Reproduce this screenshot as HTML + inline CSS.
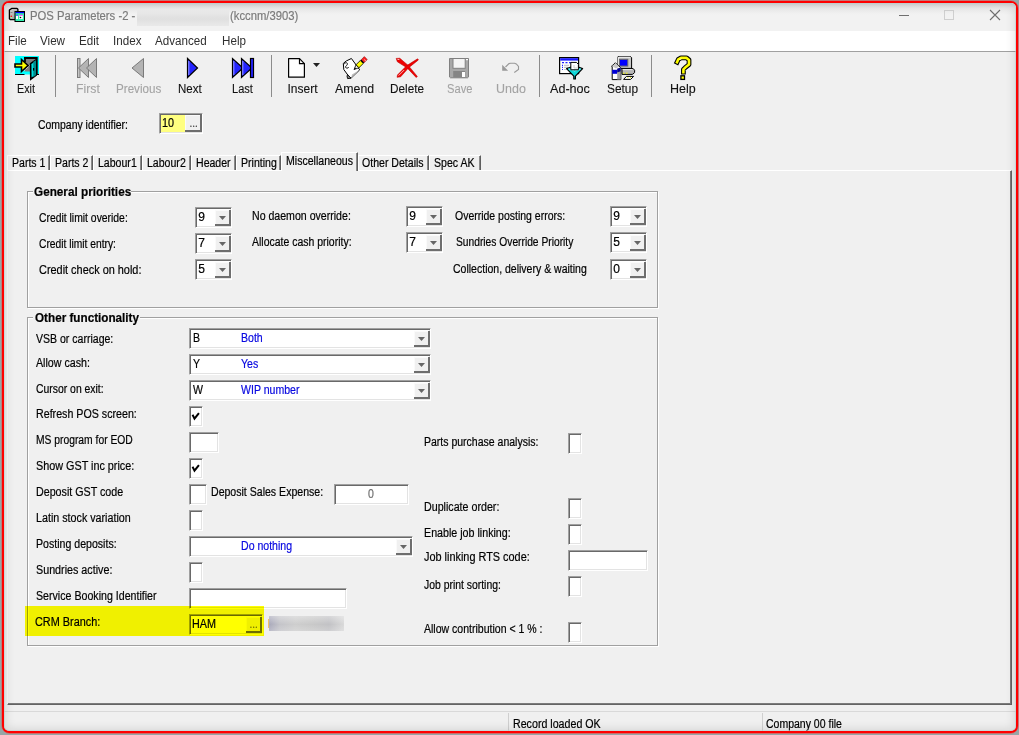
<!DOCTYPE html><html><head><meta charset="utf-8"><style>
html,body{margin:0;padding:0}
body{width:1019px;height:735px;position:relative;overflow:hidden;background:#97a5a6;font-family:"Liberation Sans",sans-serif}
.a{position:absolute;box-sizing:border-box}
.t{position:absolute;white-space:nowrap;transform-origin:0 0;font-family:"Liberation Sans",sans-serif;-webkit-text-stroke:0.2px currentColor}
.sk{border-style:solid;border-width:1px;border-color:#a0a0a0 #fff #fff #a0a0a0;box-shadow:inset 1px 1px 0 #696969,inset -1px -1px 0 #e3e3e3}
.cb{background:#f0f0f0;border-right:2px solid #6e6e6e;border-bottom:2px solid #6e6e6e;box-shadow:inset 1px 1px 0 #fafafa}
.tri{position:absolute;left:4px;top:6px;width:7px;height:4px;background:#666;clip-path:polygon(0 0,100% 0,50% 100%)}
.grp{position:absolute;box-sizing:border-box;border:1px solid #a0a0a0;box-shadow:1px 1px 0 #fff, inset 1px 1px 0 #fff}
.sep{position:absolute;width:1px;background:#8a8a8a}
</style></head><body>
<div class="a" style="left:1px;top:0px;width:1018px;height:734px;border:1px solid rgba(225,90,90,.6);border-radius:9px;border-left-color:rgba(210,100,100,.55);border-bottom-color:rgba(240,70,70,.6)"></div>
<div class="a" style="left:2px;top:1px;width:1016px;height:732px;border:2px solid #ff0000;border-radius:7px;background:#f0f0f0"></div>
<div class="a" style="left:4px;top:3px;width:1012px;height:28px;border-radius:5px 5px 0 0;background:linear-gradient(#d6d6d6,#ebebeb 5px,#f2f2f2 12px,#f2f2f2)"></div>
<div class="a" style="left:4px;top:31px;width:1012px;height:20px;background:#fff"></div>
<div class="a" style="left:4px;top:51px;width:1012px;height:1px;background:#a0a0a0"></div>
<svg class="a" style="left:6px;top:4px" width="22" height="22" viewBox="0 0 22 22"><defs><linearGradient id="tw" x1="0" y1="0" x2="1" y2="1"><stop offset="0" stop-color="#e0e0e0"/><stop offset="1" stop-color="#8c8c8c"/></linearGradient></defs>
<path d="M5.6 4.4 h5.4 l0.9 0.9 v10.3 h-7.6 l-0.9-0.9 v-8.6z" fill="url(#tw)" stroke="#000" stroke-width="1.3" stroke-linejoin="round"/>
<rect x="4.5" y="8" width="2" height="1" fill="#888"/><circle cx="5.3" cy="12.3" r="0.8" fill="#f00"/><rect x="4.6" y="13" width="1.4" height="1" fill="#9f9"/>
<rect x="9" y="7.5" width="9.5" height="10" fill="#30f0b0" stroke="#000" stroke-width="1"/>
<rect x="9.5" y="8" width="8.5" height="1.2" fill="#00f"/>
<rect x="10" y="11" width="2" height="4" fill="#fff"/><rect x="10" y="10.8" width="2" height="0.8" fill="#00f"/>
<rect x="13.2" y="11" width="3.6" height="4" fill="#fff"/><rect x="13.2" y="10.8" width="3.6" height="0.8" fill="#f0f"/>
<circle cx="14.5" cy="13.5" r="0.8" fill="#000"/>
</svg>
<div class="t" style="left:30.1px;top:9.84px;font-size:12px;line-height:12px;color:#7b7b7b;font-weight:400;transform:scaleX(0.94);">POS Parameters -2 -</div>
<div class="a" style="left:137px;top:9px;width:92px;height:17px;background:linear-gradient(180deg,#eeeeee,#e2e2e2 45%,#e0e0e0 60%,#e9e9e9)"></div>
<div class="t" style="left:230.0px;top:9.84px;font-size:12px;line-height:12px;color:#7b7b7b;font-weight:400;transform:scaleX(0.94);">(kccnm/3903)</div>
<div class="a" style="left:899px;top:15px;width:10px;height:1px;background:#6f6f6f"></div>
<div class="a" style="left:944px;top:10px;width:10px;height:10px;border:1px solid #cfcfcf"></div>
<svg class="a" style="left:989px;top:9px" width="12" height="12"><path d="M1 1 L11 11 M11 1 L1 11" stroke="#6f6f6f" stroke-width="1.1"/></svg>
<div class="t" style="left:8.2px;top:34.84px;font-size:12px;line-height:12px;color:#303030;font-weight:400;transform:scaleX(0.97);-webkit-text-stroke:0">File</div>
<div class="t" style="left:40.1px;top:34.84px;font-size:12px;line-height:12px;color:#303030;font-weight:400;transform:scaleX(0.97);-webkit-text-stroke:0">View</div>
<div class="t" style="left:79.2px;top:34.84px;font-size:12px;line-height:12px;color:#303030;font-weight:400;transform:scaleX(0.97);-webkit-text-stroke:0">Edit</div>
<div class="t" style="left:113.0px;top:34.84px;font-size:12px;line-height:12px;color:#303030;font-weight:400;transform:scaleX(0.97);-webkit-text-stroke:0">Index</div>
<div class="t" style="left:155.0px;top:34.84px;font-size:12px;line-height:12px;color:#303030;font-weight:400;transform:scaleX(0.97);-webkit-text-stroke:0">Advanced</div>
<div class="t" style="left:222.2px;top:34.84px;font-size:12px;line-height:12px;color:#303030;font-weight:400;transform:scaleX(0.97);-webkit-text-stroke:0">Help</div>
<div class="a" style="left:55px;top:55px;width:1px;height:42px;background:#8c8c8c"></div>
<div class="a" style="left:271px;top:55px;width:1px;height:42px;background:#8c8c8c"></div>
<div class="a" style="left:539px;top:55px;width:1px;height:42px;background:#8c8c8c"></div>
<div class="a" style="left:651px;top:55px;width:1px;height:42px;background:#8c8c8c"></div>
<div class="t" style="left:17.4px;top:82.84px;font-size:12px;line-height:12px;color:#111;font-weight:400;transform:scaleX(0.9);-webkit-text-stroke:0.1px currentColor">Exit</div>
<div class="t" style="left:75.8px;top:82.84px;font-size:12px;line-height:12px;color:#a3a3a3;font-weight:400;transform:scaleX(1.02);-webkit-text-stroke:0.1px currentColor">First</div>
<div class="t" style="left:116.0px;top:82.84px;font-size:12px;line-height:12px;color:#a3a3a3;font-weight:400;transform:scaleX(0.97);-webkit-text-stroke:0.1px currentColor">Previous</div>
<div class="t" style="left:177.8px;top:82.84px;font-size:12px;line-height:12px;color:#111;font-weight:400;transform:scaleX(0.96);-webkit-text-stroke:0.1px currentColor">Next</div>
<div class="t" style="left:231.9px;top:82.84px;font-size:12px;line-height:12px;color:#111;font-weight:400;transform:scaleX(0.92);-webkit-text-stroke:0.1px currentColor">Last</div>
<div class="t" style="left:287.5px;top:82.84px;font-size:12px;line-height:12px;color:#111;font-weight:400;transform:scaleX(1.0);-webkit-text-stroke:0.1px currentColor">Insert</div>
<div class="t" style="left:334.9px;top:82.84px;font-size:12px;line-height:12px;color:#111;font-weight:400;transform:scaleX(1.03);-webkit-text-stroke:0.1px currentColor">Amend</div>
<div class="t" style="left:390.0px;top:82.84px;font-size:12px;line-height:12px;color:#111;font-weight:400;transform:scaleX(0.98);-webkit-text-stroke:0.1px currentColor">Delete</div>
<div class="t" style="left:447.1px;top:82.84px;font-size:12px;line-height:12px;color:#a3a3a3;font-weight:400;transform:scaleX(0.93);-webkit-text-stroke:0.1px currentColor">Save</div>
<div class="t" style="left:495.9px;top:82.84px;font-size:12px;line-height:12px;color:#a3a3a3;font-weight:400;transform:scaleX(1.04);-webkit-text-stroke:0.1px currentColor">Undo</div>
<div class="t" style="left:549.6px;top:82.84px;font-size:12px;line-height:12px;color:#111;font-weight:400;transform:scaleX(1.05);-webkit-text-stroke:0.1px currentColor">Ad-hoc</div>
<div class="t" style="left:606.6px;top:82.84px;font-size:12px;line-height:12px;color:#111;font-weight:400;transform:scaleX(0.99);-webkit-text-stroke:0.1px currentColor">Setup</div>
<div class="t" style="left:669.7px;top:82.84px;font-size:12px;line-height:12px;color:#111;font-weight:400;transform:scaleX(1.04);-webkit-text-stroke:0.1px currentColor">Help</div>
<svg class="a" style="left:12px;top:53px" width="30" height="30" viewBox="0 0 30 30">
<rect x="3" y="3" width="24" height="18.5" fill="#00ffff"/>
<path d="M3 21.5 h9.5 M24 21.5 h3" stroke="#000" stroke-width="1"/>
<path d="M12.5 5.5 h12 v13 h-12z" fill="#808080"/>
<path d="M12 5 h12.8 v16.5 M13 5 v4" fill="none" stroke="#000" stroke-width="1.8"/>
<path d="M12.5 17.5 L18 12" stroke="#fff" stroke-width="1" stroke-dasharray="1 1"/>
<path d="M18.6 10.6 L24.2 6.8 V22 L18.8 26.2 z" fill="#00e0e0" stroke="#000" stroke-width="1.6"/>
<path d="M21.3 8.8 L24 7.2 V22 L21.3 24.2z" fill="#008a8a"/>
<rect x="21" y="15" width="1.2" height="2.6" fill="#000"/>
<path d="M3 11 h6.5 v-4.5 l6.5 6 l-6.5 6 v-4.5 h-6.5z" fill="#ffff00" stroke="#000" stroke-width="1.6"/>
</svg>
<svg class="a" style="left:72px;top:54px" width="30" height="28" viewBox="0 0 30 28">
<rect x="5.5" y="4.5" width="2.5" height="19" fill="#c4c4c4" stroke="#7a7a7a" stroke-width="1"/>
<path d="M16.5 4.5 V23.5 L6.5 14z" fill="#b4b4b4" stroke="#7a7a7a" stroke-width="1"/>
<path d="M24.5 4.5 V23.5 L14.5 14z" fill="#b4b4b4" stroke="#7a7a7a" stroke-width="1"/>
</svg>
<svg class="a" style="left:126px;top:54px" width="22" height="28" viewBox="0 0 22 28">
<path d="M17.5 4.5 V23.5 L6 14z" fill="#b4b4b4" stroke="#7a7a7a" stroke-width="1"/>
</svg>
<svg class="a" style="left:182px;top:54px" width="22" height="28" viewBox="0 0 22 28">
<path d="M5.5 4.5 V23.5 L15.5 14z" fill="#2424ff" stroke="#000" stroke-width="1.2"/>
<path d="M6.8 7 V21" stroke="#9a9aff" stroke-width="1"/>
</svg>
<svg class="a" style="left:228px;top:54px" width="30" height="28" viewBox="0 0 30 28">
<path d="M4.5 4.5 V23.5 L15 14z" fill="#2424ff" stroke="#000" stroke-width="1.2"/>
<path d="M13.5 4.5 V23.5 L24 14z" fill="#2424ff" stroke="#000" stroke-width="1.2"/>
<rect x="22.5" y="4.5" width="3" height="19" fill="#2424ff" stroke="#000" stroke-width="1.2"/>
<path d="M5.8 7 V21 M14.8 7 V21" stroke="#9a9aff" stroke-width="1"/>
</svg>
<svg class="a" style="left:284px;top:54px" width="40" height="28" viewBox="0 0 40 28">
<path d="M4.6 4.6 H15.5 L20.4 9.6 V23.2 H4.6z" fill="#fff" stroke="#000" stroke-width="1.2" stroke-linejoin="round"/>
<path d="M15.5 4.6 V9.6 H20.4" fill="none" stroke="#000" stroke-width="1.2"/>
<path d="M29 9 H36 L32.5 13z" fill="#222"/>
</svg>
<svg class="a" style="left:338px;top:53px" width="34" height="29" viewBox="0 0 34 29">
<path d="M13.4 5.5 L21.7 16.8 L13 25.2 L9.8 22 L5.8 16.5 L5.3 10.4 L8.2 8z" fill="#fff" stroke="#000" stroke-width="1"/>
<path d="M14 21.5 L21.7 16.8 L13 25.2z" fill="#bbb"/>
<path d="M9.6 21.8 L13 25.2 L9.6 25.6 L9 23z" fill="#8a8a8a" stroke="#000" stroke-width="0.9"/>
<path d="M6.2 11.2 C7 9 9.8 9.4 9.4 11.2 C9 13 7.2 12.8 7.6 14.3 C8 15.6 10.2 15.4 10.8 14" fill="none" stroke="#000" stroke-width="0.9"/>
<path d="M16 16.6 L18.05 11.69 L20.95 14.71z" fill="#e8e8e8" stroke="#000" stroke-width="0.8"/>
<path d="M16 16.6 L16.9 14.4 L18.3 15.6z" fill="#000"/>
<path d="M18.05 11.69 L22.35 7.49 L25.25 10.51 L20.95 14.71z" fill="#ffff00" stroke="#000" stroke-width="0.8"/>
<path d="M22.35 7.49 L23.35 6.49 L26.25 9.51 L25.25 10.51z" fill="#000"/>
<path d="M23.35 6.49 L26.35 3.59 L29.25 6.61 L26.25 9.51z" fill="#ff2020" stroke="#600" stroke-width="0.5"/>
<path d="M26 6.5 L28 8" stroke="#ff9a9a" stroke-width="1"/>
</svg>
<svg class="a" style="left:392px;top:54px" width="30" height="28" viewBox="0 0 30 28">
<path d="M4.2 4.4 L7.8 4.3 L16.2 11.4 L25.3 22.4 L24.2 23.5 L15 13.8 L5.4 7.8z" fill="#ee0000" stroke="#c00000" stroke-width="0.6"/>
<path d="M25.6 4.8 L26.4 5.9 L16.6 13.8 L8.6 22.8 L5.1 23.3 L5.5 20.9 L14.8 11.6z" fill="#ee0000" stroke="#c00000" stroke-width="0.6"/>
<path d="M5.4 5.3 L7.4 5.6 M6.6 21.6 L12.2 16" stroke="#ffc8c8" stroke-width="0.9"/>
</svg>
<svg class="a" style="left:444px;top:54px" width="30" height="28" viewBox="0 0 30 28">
<path d="M5.5 4.5 H24.5 V23 L23.5 23.8 H6.5 L5.5 23z" fill="#a8a8a8" stroke="#808080" stroke-width="1"/>
<rect x="9" y="4.5" width="12.2" height="9.8" fill="#f4f4f4" stroke="#808080" stroke-width="1"/>
<rect x="9.2" y="17" width="12" height="6.4" fill="#858585"/>
<rect x="18" y="18" width="3" height="5" fill="#fff"/>
<rect x="22" y="5" width="2" height="1.2" fill="#fff"/>
</svg>
<svg class="a" style="left:496px;top:56px" width="28" height="24" viewBox="0 0 28 24">
<path d="M6.2 8.8 V14.7 H12.1z" fill="#999"/>
<path d="M9.5 11 L13 7.6 L14.6 7.3 H18.6 L20.3 8 L22.5 10.4 V13.4 L18.3 16.5" fill="none" stroke="#999" stroke-width="1.1"/>
</svg>
<svg class="a" style="left:555px;top:53px" width="34" height="30" viewBox="0 0 34 30">
<rect x="4.6" y="4.6" width="19" height="16" fill="#fff" stroke="#000" stroke-width="1.2"/>
<rect x="5.2" y="5.2" width="17.8" height="2.4" fill="#1818ff"/>
<path d="M7 9.6 h2 M10.5 9.6 h2 M14 9.6 h2" stroke="#2020ff" stroke-width="1.2"/>
<path d="M7 12.3 h1 M7 14.4 h1 M7 16.5 h1" stroke="#2020ff" stroke-width="1.2"/>
<path d="M9 12.3 h5 M9 14.4 h4 M9 16.5 h3" stroke="#c8c8c8" stroke-width="1.2"/>
<path d="M11.6 15.6 L19.6 12.8 L27.6 15.6 L20.4 23.2 V26 H18.8 V23.2z" fill="#10d8d8" stroke="#000" stroke-width="1.2" stroke-linejoin="round"/>
<path d="M13.5 15.8 L19.6 18 L25.8 15.8" fill="none" stroke="#8ff" stroke-width="1"/>
<path d="M15.8 9.4 H21.5 L23.4 11.4 V16.8 H15.8z" fill="#fff" stroke="#000" stroke-width="1"/>
<path d="M19 12 V15 H22" fill="none" stroke="#ccc" stroke-width="1"/>
</svg>
<svg class="a" style="left:606px;top:53px" width="34" height="30" viewBox="0 0 34 30">
<path d="M12 3.6 H24.6 L25.6 4.6 V15.4 H12z" fill="#c8c8c8" stroke="#000" stroke-width="1"/>
<path d="M12.5 4.2 H24.2 M12.6 4.2 V14.8" stroke="#fff" stroke-width="1"/>
<rect x="13.4" y="6.3" width="8.4" height="6.8" fill="#0000ff" stroke="#6a6a6a" stroke-width="1"/>
<path d="M16 15.6 H27.2 L28.6 17.2 V19.6 L26.4 21.4 H16z" fill="#b8b8b8" stroke="#000" stroke-width="1"/>
<path d="M16.6 16.6 H26.6" stroke="#eee" stroke-width="1"/>
<path d="M17 20.2 h1.6 M20 20.2 h1.6" stroke="#ffff00" stroke-width="1"/>
<path d="M5.6 13.2 L9.4 9.8 L10.4 10.8 L14.8 14.8 V26.6 H6.2 V13.4z" fill="#fff" stroke="#000" stroke-width="1"/>
<path d="M6 13 L9.4 10.2 L13 13.6 L10 15.6z" fill="#c8c8c8"/>
<rect x="6.2" y="16.8" width="5" height="4" fill="#0000d8"/>
<path d="M11.2 15.8 L14.6 14.6 V26.4 L11.2 26.4z" fill="#a0a0a0"/>
<path d="M11.2 15.8 L14.6 14.6 V18.2 L11.2 19.6z" fill="#000090"/>
<path d="M17.6 26.4 H24.6 L27.6 23.4 H20.4z" fill="#fff" stroke="#000" stroke-width="1"/>
<path d="M21.4 24.6 h1 M24 24.6 h1" stroke="#ee0" stroke-width="1"/>
</svg>
<svg class="a" style="left:668px;top:53px" width="30" height="30" viewBox="0 0 30 30">
<path d="M9 9.2 L10.3 6.4 L13 4.9 H18.6 L21 6.9 V11.6 L17.2 14.6 L15.4 16.4 V19.2" fill="none" stroke="#000" stroke-width="4.8" stroke-linejoin="round" stroke-linecap="square"/>
<path d="M9 9.2 L10.3 6.4 L13 4.9 H18.6 L21 6.9 V11.6 L17.2 14.6 L15.4 16.4 V19.2" fill="none" stroke="#ffff00" stroke-width="2.6" stroke-linejoin="round" stroke-linecap="square"/>
<path d="M11.5 6.5 L13.5 5.8" stroke="#ffffc0" stroke-width="1"/>
<rect x="12.9" y="22.8" width="3.6" height="3.6" fill="#ffff00" stroke="#000" stroke-width="1.3"/>
</svg>
<div class="t" style="left:37.8px;top:118.84px;font-size:12px;line-height:12px;color:#000;font-weight:400;transform:scaleX(0.8702);">Company identifier:</div>
<div class="a sk" style="left:159px;top:113px;width:44px;height:21px;background:#ffff80"></div>
<div class="a cb" style="left:185px;top:115px;width:17px;height:17px"></div>
<div class="t" style="left:189.4px;top:118.54px;font-size:10px;line-height:10px;color:#444;font-weight:400;transform:scaleX(1);">...</div>
<div class="t" style="left:161.9px;top:116.84px;font-size:12px;line-height:12px;color:#000;font-weight:400;transform:scaleX(0.9);">10</div>
<div class="a" style="left:7px;top:170px;width:1005px;height:535px;border-top:1px solid #fff;border-left:1px solid rgba(255,255,255,.55);border-right:1px solid #646464;border-bottom:1px solid #646464;box-shadow:inset -1px -1px 0 #7c7c7c"></div>
<div class="a" style="left:7px;top:155px;width:43px;height:15px;border-top:1px solid #fff;border-left:1px solid #fff;border-right:1px solid #5e5e5e;box-shadow:inset -1px 0 0 #8a8a8a;background:#efefef"></div>
<div class="a" style="left:50px;top:155px;width:43px;height:15px;border-top:1px solid #fff;border-left:1px solid #fff;border-right:1px solid #5e5e5e;box-shadow:inset -1px 0 0 #8a8a8a;background:#efefef"></div>
<div class="a" style="left:93px;top:155px;width:49px;height:15px;border-top:1px solid #fff;border-left:1px solid #fff;border-right:1px solid #5e5e5e;box-shadow:inset -1px 0 0 #8a8a8a;background:#efefef"></div>
<div class="a" style="left:142px;top:155px;width:49px;height:15px;border-top:1px solid #fff;border-left:1px solid #fff;border-right:1px solid #5e5e5e;box-shadow:inset -1px 0 0 #8a8a8a;background:#efefef"></div>
<div class="a" style="left:191px;top:155px;width:45px;height:15px;border-top:1px solid #fff;border-left:1px solid #fff;border-right:1px solid #5e5e5e;box-shadow:inset -1px 0 0 #8a8a8a;background:#efefef"></div>
<div class="a" style="left:236px;top:155px;width:45px;height:15px;border-top:1px solid #fff;border-left:1px solid #fff;border-right:1px solid #5e5e5e;box-shadow:inset -1px 0 0 #8a8a8a;background:#efefef"></div>
<div class="a" style="left:358px;top:155px;width:71px;height:15px;border-top:1px solid #fff;border-left:1px solid #fff;border-right:1px solid #5e5e5e;box-shadow:inset -1px 0 0 #8a8a8a;background:#efefef"></div>
<div class="a" style="left:429px;top:155px;width:52px;height:15px;border-top:1px solid #fff;border-left:1px solid #fff;border-right:1px solid #5e5e5e;box-shadow:inset -1px 0 0 #8a8a8a;background:#efefef"></div>
<div class="a" style="left:281px;top:152px;width:77px;height:19px;background:#f0f0f0;border-left:1px solid #fff;border-top:1px solid #fff;border-right:1px solid #5e5e5e;box-shadow:inset -1px 0 0 #8a8a8a"></div>
<div class="t" style="left:11.7px;top:156.84px;font-size:12px;line-height:12px;color:#000;font-weight:400;transform:scaleX(0.88);">Parts 1</div>
<div class="t" style="left:55.2px;top:156.84px;font-size:12px;line-height:12px;color:#000;font-weight:400;transform:scaleX(0.88);">Parts 2</div>
<div class="t" style="left:98.2px;top:156.84px;font-size:12px;line-height:12px;color:#000;font-weight:400;transform:scaleX(0.88);">Labour1</div>
<div class="t" style="left:147.2px;top:156.84px;font-size:12px;line-height:12px;color:#000;font-weight:400;transform:scaleX(0.88);">Labour2</div>
<div class="t" style="left:196.4px;top:156.84px;font-size:12px;line-height:12px;color:#000;font-weight:400;transform:scaleX(0.88);">Header</div>
<div class="t" style="left:241.0px;top:156.84px;font-size:12px;line-height:12px;color:#000;font-weight:400;transform:scaleX(0.88);">Printing</div>
<div class="t" style="left:362.4px;top:156.84px;font-size:12px;line-height:12px;color:#000;font-weight:400;transform:scaleX(0.88);">Other Details</div>
<div class="t" style="left:433.9px;top:156.84px;font-size:12px;line-height:12px;color:#000;font-weight:400;transform:scaleX(0.88);">Spec AK</div>
<div class="t" style="left:286.0px;top:154.84px;font-size:12px;line-height:12px;color:#000;font-weight:400;transform:scaleX(0.88);">Miscellaneous</div>
<div class="grp" style="left:27px;top:191px;width:631px;height:117px"></div>
<div class="a" style="left:33px;top:186px;width:98px;height:12px;background:#f0f0f0"></div>
<div class="t" style="left:34.0px;top:185.84px;font-size:12px;line-height:12px;color:#000;font-weight:700;transform:scaleX(0.978);">General priorities</div>
<div class="grp" style="left:27px;top:317px;width:631px;height:329px"></div>
<div class="a" style="left:33px;top:312px;width:107px;height:12px;background:#f0f0f0"></div>
<div class="t" style="left:34.5px;top:311.84px;font-size:12px;line-height:12px;color:#000;font-weight:700;transform:scaleX(0.975);">Other functionality</div>
<div class="t" style="left:38.9px;top:211.84px;font-size:12px;line-height:12px;color:#000;font-weight:400;transform:scaleX(0.8643);">Credit limit overide:</div>
<div class="t" style="left:38.9px;top:237.84px;font-size:12px;line-height:12px;color:#000;font-weight:400;transform:scaleX(0.855);">Credit limit entry:</div>
<div class="t" style="left:38.9px;top:263.84px;font-size:12px;line-height:12px;color:#000;font-weight:400;transform:scaleX(0.9089);">Credit check on hold:</div>
<div class="a sk" style="left:195px;top:207px;width:37px;height:21px;background:#fff"></div>
<div class="a cb" style="left:215px;top:210px;width:16px;height:16px"><div class="tri"></div></div>
<div class="t" style="left:198.2px;top:210.84px;font-size:12px;line-height:12px;color:#000;font-weight:400;transform:scaleX(1);">9</div>
<div class="a sk" style="left:195px;top:233px;width:37px;height:21px;background:#fff"></div>
<div class="a cb" style="left:215px;top:236px;width:16px;height:16px"><div class="tri"></div></div>
<div class="t" style="left:198.2px;top:236.84px;font-size:12px;line-height:12px;color:#000;font-weight:400;transform:scaleX(1);">7</div>
<div class="a sk" style="left:195px;top:259px;width:37px;height:21px;background:#fff"></div>
<div class="a cb" style="left:215px;top:262px;width:16px;height:16px"><div class="tri"></div></div>
<div class="t" style="left:198.2px;top:262.84px;font-size:12px;line-height:12px;color:#000;font-weight:400;transform:scaleX(1);">5</div>
<div class="t" style="left:251.6px;top:209.84px;font-size:12px;line-height:12px;color:#000;font-weight:400;transform:scaleX(0.8818);">No daemon override:</div>
<div class="t" style="left:251.6px;top:235.84px;font-size:12px;line-height:12px;color:#000;font-weight:400;transform:scaleX(0.873);">Allocate cash priority:</div>
<div class="a sk" style="left:406px;top:206px;width:37px;height:21px;background:#fff"></div>
<div class="a cb" style="left:426px;top:209px;width:16px;height:16px"><div class="tri"></div></div>
<div class="t" style="left:409.2px;top:209.84px;font-size:12px;line-height:12px;color:#000;font-weight:400;transform:scaleX(1);">9</div>
<div class="a sk" style="left:406px;top:232px;width:37px;height:21px;background:#fff"></div>
<div class="a cb" style="left:426px;top:235px;width:16px;height:16px"><div class="tri"></div></div>
<div class="t" style="left:409.2px;top:235.84px;font-size:12px;line-height:12px;color:#000;font-weight:400;transform:scaleX(1);">7</div>
<div class="t" style="left:455.1px;top:209.84px;font-size:12px;line-height:12px;color:#000;font-weight:400;transform:scaleX(0.8736);">Override posting errors:</div>
<div class="t" style="left:455.7px;top:235.84px;font-size:12px;line-height:12px;color:#000;font-weight:400;transform:scaleX(0.8538);">Sundries Override Priority</div>
<div class="t" style="left:453.1px;top:262.84px;font-size:12px;line-height:12px;color:#000;font-weight:400;transform:scaleX(0.876);">Collection, delivery &amp; waiting</div>
<div class="a sk" style="left:610px;top:206px;width:37px;height:21px;background:#fff"></div>
<div class="a cb" style="left:630px;top:209px;width:16px;height:16px"><div class="tri"></div></div>
<div class="t" style="left:613.2px;top:209.84px;font-size:12px;line-height:12px;color:#000;font-weight:400;transform:scaleX(1);">9</div>
<div class="a sk" style="left:610px;top:232px;width:37px;height:21px;background:#fff"></div>
<div class="a cb" style="left:630px;top:235px;width:16px;height:16px"><div class="tri"></div></div>
<div class="t" style="left:613.2px;top:235.84px;font-size:12px;line-height:12px;color:#000;font-weight:400;transform:scaleX(1);">5</div>
<div class="a sk" style="left:610px;top:259px;width:37px;height:21px;background:#fff"></div>
<div class="a cb" style="left:630px;top:262px;width:16px;height:16px"><div class="tri"></div></div>
<div class="t" style="left:613.2px;top:262.84px;font-size:12px;line-height:12px;color:#000;font-weight:400;transform:scaleX(1);">0</div>
<div class="t" style="left:35.6px;top:332.84px;font-size:12px;line-height:12px;color:#000;font-weight:400;transform:scaleX(0.8777);">VSB or carriage:</div>
<div class="t" style="left:35.6px;top:356.84px;font-size:12px;line-height:12px;color:#000;font-weight:400;transform:scaleX(0.89);">Allow cash:</div>
<div class="t" style="left:35.6px;top:382.84px;font-size:12px;line-height:12px;color:#000;font-weight:400;transform:scaleX(0.867);">Cursor on exit:</div>
<div class="t" style="left:35.6px;top:407.84px;font-size:12px;line-height:12px;color:#000;font-weight:400;transform:scaleX(0.889);">Refresh POS screen:</div>
<div class="t" style="left:35.6px;top:433.84px;font-size:12px;line-height:12px;color:#000;font-weight:400;transform:scaleX(0.8586);">MS program for EOD</div>
<div class="t" style="left:35.6px;top:459.84px;font-size:12px;line-height:12px;color:#000;font-weight:400;transform:scaleX(0.9004);">Show GST inc price:</div>
<div class="t" style="left:35.6px;top:485.84px;font-size:12px;line-height:12px;color:#000;font-weight:400;transform:scaleX(0.8903);">Deposit GST code</div>
<div class="t" style="left:35.6px;top:511.84px;font-size:12px;line-height:12px;color:#000;font-weight:400;transform:scaleX(0.8933);">Latin stock variation</div>
<div class="t" style="left:35.6px;top:537.84px;font-size:12px;line-height:12px;color:#000;font-weight:400;transform:scaleX(0.8823);">Posting deposits:</div>
<div class="t" style="left:35.6px;top:563.84px;font-size:12px;line-height:12px;color:#000;font-weight:400;transform:scaleX(0.8944);">Sundries active:</div>
<div class="t" style="left:35.6px;top:589.84px;font-size:12px;line-height:12px;color:#000;font-weight:400;transform:scaleX(0.8859);">Service Booking Identifier</div>
<div class="a sk" style="left:189px;top:328px;width:242px;height:21px;background:#fff"></div>
<div class="a cb" style="left:414px;top:331px;width:16px;height:16px"><div class="tri"></div></div>
<div class="t" style="left:192.8px;top:331.84px;font-size:12px;line-height:12px;color:#000;font-weight:400;transform:scaleX(0.88);">B</div>
<div class="t" style="left:240.6px;top:331.84px;font-size:12px;line-height:12px;color:#0808e0;font-weight:400;transform:scaleX(0.88);">Both</div>
<div class="a sk" style="left:189px;top:354px;width:242px;height:21px;background:#fff"></div>
<div class="a cb" style="left:414px;top:357px;width:16px;height:16px"><div class="tri"></div></div>
<div class="t" style="left:192.8px;top:357.84px;font-size:12px;line-height:12px;color:#000;font-weight:400;transform:scaleX(0.88);">Y</div>
<div class="t" style="left:240.6px;top:357.84px;font-size:12px;line-height:12px;color:#0808e0;font-weight:400;transform:scaleX(0.88);">Yes</div>
<div class="a sk" style="left:189px;top:380px;width:242px;height:21px;background:#fff"></div>
<div class="a cb" style="left:414px;top:383px;width:16px;height:16px"><div class="tri"></div></div>
<div class="t" style="left:192.8px;top:383.84px;font-size:12px;line-height:12px;color:#000;font-weight:400;transform:scaleX(0.88);">W</div>
<div class="t" style="left:240.6px;top:383.84px;font-size:12px;line-height:12px;color:#0808e0;font-weight:400;transform:scaleX(0.88);">WIP number</div>
<div class="a sk" style="left:189px;top:406px;width:14px;height:21px;background:#fff"></div>
<svg class="a" style="left:189px;top:406px" width="14" height="21"><path d="M4 9.6 L5.5 12.6 L9.3 7.9" fill="none" stroke="#000" stroke-width="2" stroke-linecap="square"/></svg>
<div class="a sk" style="left:189px;top:432px;width:30px;height:21px;background:#fff"></div>
<div class="a sk" style="left:189px;top:458px;width:14px;height:21px;background:#fff"></div>
<svg class="a" style="left:189px;top:458px" width="14" height="21"><path d="M4 9.6 L5.5 12.6 L9.3 7.9" fill="none" stroke="#000" stroke-width="2" stroke-linecap="square"/></svg>
<div class="a sk" style="left:189px;top:484px;width:18px;height:21px;background:#fff"></div>
<div class="t" style="left:211.3px;top:485.84px;font-size:12px;line-height:12px;color:#000;font-weight:400;transform:scaleX(0.88);">Deposit Sales Expense:</div>
<div class="a sk" style="left:334px;top:484px;width:75px;height:21px;background:#fff"></div>
<div class="t" style="left:367.8px;top:487.84px;font-size:12px;line-height:12px;color:#6e6e6e;font-weight:400;transform:scaleX(0.88);">0</div>
<div class="a sk" style="left:189px;top:510px;width:14px;height:21px;background:#fff"></div>
<div class="a sk" style="left:189px;top:536px;width:224px;height:21px;background:#fff"></div>
<div class="a cb" style="left:396px;top:539px;width:16px;height:16px"><div class="tri"></div></div>
<div class="t" style="left:241.1px;top:539.84px;font-size:12px;line-height:12px;color:#0808e0;font-weight:400;transform:scaleX(0.88);">Do nothing</div>
<div class="a sk" style="left:189px;top:562px;width:14px;height:21px;background:#fff"></div>
<div class="a sk" style="left:189px;top:588px;width:158px;height:21px;background:#fff"></div>
<div class="a sk" style="left:189px;top:614px;width:74px;height:21px;background:#fff"></div>
<div class="a cb" style="left:246px;top:617px;width:16px;height:16px"></div>
<div class="t" style="left:249.4px;top:619.54px;font-size:10px;line-height:10px;color:#777;font-weight:400;transform:scaleX(1);">...</div>
<div class="t" style="left:191.8px;top:617.84px;font-size:12px;line-height:12px;color:#000;font-weight:400;transform:scaleX(0.9);">HAM</div>
<div class="t" style="left:34.9px;top:615.84px;font-size:12px;line-height:12px;color:#000;font-weight:400;transform:scaleX(0.9054);">CRM Branch:</div>
<div class="a" style="left:269px;top:616px;width:75px;height:15px;background:linear-gradient(180deg,rgba(255,255,255,.35),rgba(255,255,255,0) 55%,rgba(255,255,255,.2)),linear-gradient(90deg,#a9a9bb,#c4c4c9 14%,#cecece 35%,#c8c8c8 60%,#c2c2c5 80%,#d9d9d9)"></div>
<div class="a" style="left:268px;top:619px;width:1px;height:9px;background:#f0c070"></div>
<div class="a" style="left:25px;top:606px;width:239px;height:30px;background:#ffff00;mix-blend-mode:multiply"></div>
<div class="t" style="left:423.7px;top:435.84px;font-size:12px;line-height:12px;color:#000;font-weight:400;transform:scaleX(0.8754);">Parts purchase analysis:</div>
<div class="t" style="left:423.7px;top:500.84px;font-size:12px;line-height:12px;color:#000;font-weight:400;transform:scaleX(0.8896);">Duplicate order:</div>
<div class="t" style="left:423.7px;top:526.84px;font-size:12px;line-height:12px;color:#000;font-weight:400;transform:scaleX(0.8904);">Enable job linking:</div>
<div class="t" style="left:423.7px;top:550.84px;font-size:12px;line-height:12px;color:#000;font-weight:400;transform:scaleX(0.9077);">Job linking RTS code:</div>
<div class="t" style="left:423.7px;top:578.84px;font-size:12px;line-height:12px;color:#000;font-weight:400;transform:scaleX(0.8663);">Job print sorting:</div>
<div class="t" style="left:423.7px;top:622.84px;font-size:12px;line-height:12px;color:#000;font-weight:400;transform:scaleX(0.877);">Allow contribution &lt; 1 % :</div>
<div class="a sk" style="left:568px;top:433px;width:14px;height:21px;background:#fff"></div>
<div class="a sk" style="left:568px;top:498px;width:14px;height:21px;background:#fff"></div>
<div class="a sk" style="left:568px;top:524px;width:14px;height:21px;background:#fff"></div>
<div class="a sk" style="left:568px;top:550px;width:80px;height:21px;background:#fff"></div>
<div class="a sk" style="left:568px;top:576px;width:14px;height:21px;background:#fff"></div>
<div class="a sk" style="left:568px;top:622px;width:14px;height:21px;background:#fff"></div>
<div class="a" style="left:4px;top:711px;width:1012px;height:1px;background:#d9d9d9"></div>
<div class="a" style="left:508px;top:713px;width:1px;height:18px;background:#cfcfcf"></div>
<div class="a" style="left:762px;top:713px;width:1px;height:18px;background:#cfcfcf"></div>
<div class="t" style="left:513.0px;top:717.84px;font-size:12px;line-height:12px;color:#000;font-weight:400;transform:scaleX(0.8882);">Record loaded OK</div>
<div class="t" style="left:766.1px;top:717.84px;font-size:12px;line-height:12px;color:#000;font-weight:400;transform:scaleX(0.8753);">Company 00 file</div>
<div class="a" style="left:4px;top:3px;width:1012px;height:728px;border-radius:5px;box-shadow:inset 0 0 10px 2px rgba(0,0,0,.11), inset 0 0 0 1px rgba(200,225,225,.6);pointer-events:none"></div>
</body></html>
